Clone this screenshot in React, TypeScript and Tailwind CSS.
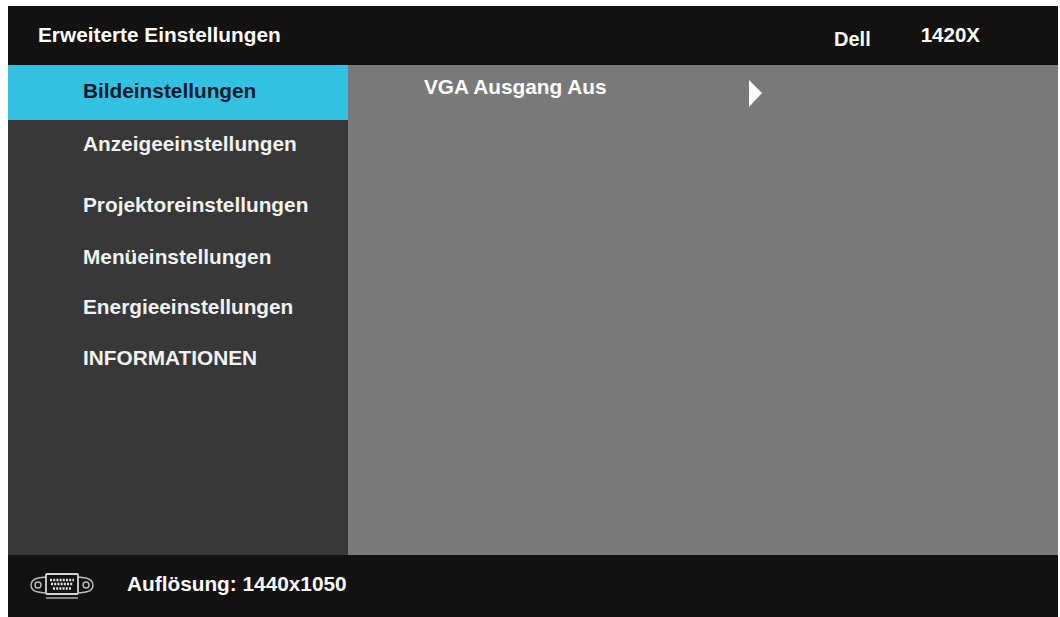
import React from 'react';

const font = "font-['Liberation_Sans',Arial,sans-serif]";

const menu = [
  { label: 'Anzeigeeinstellungen', mt: 'mt-0' },
  { label: 'Projektoreinstellungen', mt: 'mt-[13px]' },
  { label: 'Menüeinstellungen', mt: 'mt-[4px]' },
  { label: 'Energieeinstellungen', mt: 'mt-[2px]' },
  { label: 'INFORMATIONEN', mt: 'mt-[3px]' },
];

const VgaIcon = () => (
  <svg width="66" height="28" viewBox="0 0 66 28" fill="none" stroke="#bdbdbd" strokeWidth="1.4">
    <path d="M17 5 L9 6 Q2 8 2 13 Q2 19 9 20 L16 21" />
    <path d="M49 5 L57 6 Q64 8 64 13 Q64 19 57 20 L50 21" />
    <circle cx="9" cy="13" r="3" />
    <circle cx="57" cy="13" r="3" />
    <rect x="17" y="2" width="32" height="20" rx="1" strokeWidth="1.8" stroke="#d4d4d4" />
    <path d="M21 8h24M22 12h22M24 16.500h18" stroke="#e5e5e5" strokeWidth="2.6" strokeDasharray="2 1.2" />
    <path d="M17 26h32" stroke="#b5b5b5" />
  </svg>
);

const App: React.FC = () => {
  return (
    <div className={`h-[617px] w-[1060px] overflow-hidden bg-white pl-[8px] pr-[2px] pt-[6px] ${font} font-bold`}>
      <div className="flex h-[611px] flex-col">
        {/* header */}
        <div className="flex h-[59px] shrink-0 bg-[#141111] text-white">
          <div className="pl-[30px] pt-[16px] text-[20.800px] leading-[26px]">Erweiterte Einstellungen</div>
          <div className="ml-auto pt-[20px] text-[20px] leading-[26px]">Dell</div>
          <div className="ml-[50px] mr-[78px] pt-[16px] text-[20.500px] leading-[26px]">1420X</div>
        </div>

        {/* body */}
        <div className="flex min-h-0 flex-1">
          <div className="w-[340px] shrink-0 bg-[#383838] text-[#f2f2f2]">
            <div className="flex h-[55px] items-center bg-[#33c1e3] pb-[3px] pl-[75px] text-[20.800px] text-[#071a2b]">
              Bildeinstellungen
            </div>
            {menu.map((m) => (
              <div key={m.label} className={`flex h-[48px] items-center pl-[75px] text-[20.800px] ${m.mt}`}>
                {m.label}
              </div>
            ))}
          </div>
          <div className="flex flex-1 items-start bg-[#797979] text-white">
            <div className="pl-[76px] pt-[9px] text-[20.800px] leading-[26px]">VGA Ausgang Aus</div>
            <svg className="ml-[141px] mt-[15px]" width="14" height="28" viewBox="0 0 14 28">
              <path d="M1 0 L14 13 L1 27 Z" fill="#fff" />
            </svg>
          </div>
        </div>

        {/* footer */}
        <div className="flex h-[62px] shrink-0 items-center bg-[#141111] text-white">
          <div className="ml-[21px] w-[66px]">
            <VgaIcon />
          </div>
          <div className="ml-[32px] pb-[4px] text-[20.800px]">Auflösung: 1440x1050</div>
        </div>
      </div>
    </div>
  );
};

export default App;
